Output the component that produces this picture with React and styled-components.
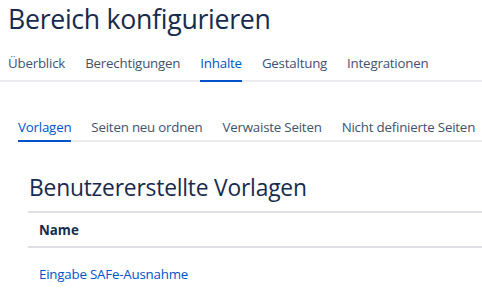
import React from 'react';
import styled, { createGlobalStyle } from 'styled-components';

const GlobalStyle = createGlobalStyle`
  body {
    margin: 0;
    background: #ffffff;
    font-family: "Open Sans", "Noto Sans", sans-serif;
    color: #172b4d;
    overflow: hidden;
  }
`;

const Page = styled.div`
  width: 482px;
  height: 292px;
  overflow: hidden;
`;

const Title = styled.h1`
  margin: 0;
  padding: 0 0 0 8px;
  font-size: 26.7px;
  font-weight: 400;
  line-height: normal;
  letter-spacing: -0.3px;
  color: #172b4d;
  white-space: nowrap;
`;

const TabBar = styled.nav`
  display: flex;
  gap: 20px;
  margin: ${({ $margin }) => $margin};
  padding-left: ${({ $indent }) => $indent || 0}px;
  border-bottom: 2px solid #ebecf0;
  white-space: nowrap;
`;

const Tab = styled.div`
  font-size: 13.3px;
  line-height: 20px;
  padding-bottom: ${({ $pad }) => $pad}px;
  margin-bottom: -2px;
  color: ${({ $active }) => ($active ? '#0052cc' : '#42526e')};
  border-bottom: 2px solid ${({ $active }) => ($active ? '#0052cc' : 'transparent')};
  letter-spacing: -0.2px;
`;

const Section = styled.section`
  margin: 31px 0 0 28px;
`;

const SectionTitle = styled.h2`
  margin: 0 0 0 1px;
  font-size: 22.8px;
  font-weight: 400;
  line-height: 30px;
  letter-spacing: -0.2px;
  color: #172b4d;
  white-space: nowrap;
`;

const Table = styled.table`
  width: 100%;
  margin-top: 8px;
  border-collapse: collapse;
  font-size: 13.3px;
`;

const HeadCell = styled.th`
  text-align: left;
  font-weight: 700;
  padding: 8px 11px 7px;
  line-height: 18px;
  border-top: 2px solid #dfe1e6;
  border-bottom: 2px solid #dfe1e6;
  color: #172b4d;
`;

const Cell = styled.td`
  padding: 16px 11px;
  line-height: 20px;
`;

const Link = styled.a`
  color: #0052cc;
  text-decoration: none;
  letter-spacing: -0.2px;
`;

const mainTabs = ['Überblick', 'Berechtigungen', 'Inhalte', 'Gestaltung', 'Integrationen'];
const subTabs = ['Vorlagen', 'Seiten neu ordnen', 'Verwaiste Seiten', 'Nicht definierte Seiten'];

export default function App() {
  return (
    <Page>
      <GlobalStyle />
      <Title>Bereich konfigurieren</Title>
      <TabBar $margin="16px 0 0 0" $indent={8}>
        {mainTabs.map((t) => (
          <Tab key={t} $pad={7} $active={t === 'Inhalte'}>{t}</Tab>
        ))}
      </TabBar>
      <TabBar $margin="35px 0 0 18px">
        {subTabs.map((t) => (
          <Tab key={t} $pad={3} $active={t === 'Vorlagen'}>{t}</Tab>
        ))}
      </TabBar>
      <Section>
        <SectionTitle>Benutzererstellte Vorlagen</SectionTitle>
        <Table>
          <thead>
            <tr>
              <HeadCell>Name</HeadCell>
            </tr>
          </thead>
          <tbody>
            <tr>
              <Cell>
                <Link href="#">Eingabe SAFe-Ausnahme</Link>
              </Cell>
            </tr>
          </tbody>
        </Table>
      </Section>
    </Page>
  );
}
